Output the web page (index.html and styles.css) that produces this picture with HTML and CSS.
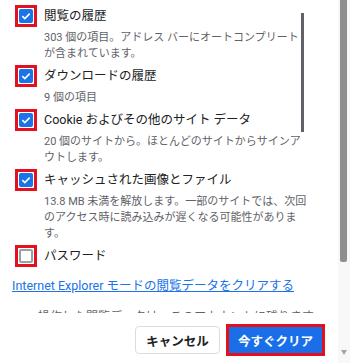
FILE: index.html
```html
<!DOCTYPE html>
<html lang="ja">
<head>
<meta charset="utf-8">
<link rel="stylesheet" href="styles.css">
</head>
<body>
<div class="page">
  <div class="dialog">
    <div class="scroll">
      <div class="thumb-inner"></div>
      <div class="item">
        <span class="mark"><span class="cb checked"><svg viewBox="0 0 14 14"><path d="M3.3 7.2 L5.8 9.6 L10.7 4.6" fill="none" stroke="#fff" stroke-width="1.6"/></svg></span></span>
        <span class="label">閲覧の履歴</span>
        <span class="desc">303 個の項目。アドレス バーにオートコンプリート<br>が含まれています。</span>
      </div>
      <div class="item">
        <span class="mark"><span class="cb checked"><svg viewBox="0 0 14 14"><path d="M3.3 7.2 L5.8 9.6 L10.7 4.6" fill="none" stroke="#fff" stroke-width="1.6"/></svg></span></span>
        <span class="label">ダウンロードの履歴</span>
        <span class="desc">9 個の項目</span>
      </div>
      <div class="item">
        <span class="mark"><span class="cb checked"><svg viewBox="0 0 14 14"><path d="M3.3 7.2 L5.8 9.6 L10.7 4.6" fill="none" stroke="#fff" stroke-width="1.6"/></svg></span></span>
        <span class="label">Cookie およびその他のサイト データ</span>
        <span class="desc">20 個のサイトから。ほとんどのサイトからサインア<br>ウトします。</span>
      </div>
      <div class="item">
        <span class="mark"><span class="cb checked"><svg viewBox="0 0 14 14"><path d="M3.3 7.2 L5.8 9.6 L10.7 4.6" fill="none" stroke="#fff" stroke-width="1.6"/></svg></span></span>
        <span class="label">キャッシュされた画像とファイル</span>
        <span class="desc">13.8 MB 未満を解放します。一部のサイトでは、次回<br>のアクセス時に読み込みが遅くなる可能性がありま<br>す。</span>
      </div>
      <div class="item">
        <span class="mark"><span class="cb"></span></span>
        <span class="label">パスワード</span>
      </div>
      <a class="link" href="#">Internet Explorer モードの閲覧データをクリアする</a>
      <p class="hidden-line">操作した閲覧データは、このアカウントに残ります。</p>
    </div>
    <div class="footer">
      <button class="btn cancel">キャンセル</button>
      <span class="hl"><button class="btn primary">今すぐクリア</button></span>
    </div>
  </div>
  <div class="sbar">
    <div class="sthumb"></div>
    <div class="sarrow"></div>
  </div>
</div>
</body>
</html>
```
FILE: styles.css
```css
html, body {
  margin: 0;
  padding: 0;
  background: #fff;
}
body {
  font-family: Roboto, "Noto Sans CJK JP", sans-serif;
  color: #202124;
  width: 350px;
  height: 363px;
  overflow: hidden;
}
.page {
  display: flex;
  width: 350px;
  height: 363px;
}
.dialog {
  width: 338px;
  display: flex;
  flex-direction: column;
}
.scroll {
  position: relative;
  height: 313px;
  overflow: hidden;
  padding: 5px 0 0 15px;
  box-sizing: border-box;
}
.thumb-inner {
  position: absolute;
  left: 301px;
  top: 13px;
  width: 3px;
  height: 119px;
  background: #5f6368;
}
.item {
  display: grid;
  grid-template-columns: 22px 1fr;
  column-gap: 7px;
  margin-bottom: 3px;
  width: 290px;
}
.mark {
  width: 22px;
  height: 22px;
  box-sizing: border-box;
  border: 3px solid #e3101d;
  display: flex;
  align-items: center;
  justify-content: center;
}
.cb {
  width: 14px;
  height: 14px;
  box-sizing: border-box;
  border-radius: 2px;
  border: 2px solid #9aa0a6;
  display: block;
}
.cb.checked {
  border: none;
  background: #1a73e8;
}
.cb svg {
  display: block;
  width: 14px;
  height: 14px;
}
.label {
  font-size: 12.5px;
  line-height: 22px;
  color: #202124;
}
.desc {
  grid-column: 2;
  padding-top: 3px;
  font-size: 11px;
  line-height: 16px;
  color: #5f6368;
  white-space: nowrap;
}
.link {
  display: block;
  margin: 9px 0 0 -3px;
  font-size: 12.5px;
  line-height: 20px;
  color: #1a73e8;
  text-decoration: underline;
}
.hidden-line {
  margin: 12px 0 0 23px;
  font-size: 12px;
  line-height: 18px;
  color: #5f6368;
  white-space: nowrap;
}
.footer {
  display: flex;
  justify-content: flex-end;
  align-items: center;
  gap: 6px;
  padding: 11px 13px 0 0;
}
.btn {
  font-family: Roboto, "Noto Sans CJK JP", sans-serif;
  font-size: 12.5px;
  font-weight: 700;
  border-radius: 4px;
  cursor: pointer;
}
.cancel {
  width: 85px;
  height: 28px;
  background: #fff;
  border: 1px solid #dadce0;
  color: #202124;
}
.hl {
  display: block;
  border: 3px solid #e3101d;
}
.primary {
  display: block;
  width: 93px;
  height: 26px;
  border: none;
  border-radius: 0;
  background: #1a6fe8;
  color: #fff;
}
.sbar {
  width: 12px;
  background: #f8f8f8;
  display: flex;
  flex-direction: column;
  align-items: center;
  justify-content: space-between;
  padding-bottom: 8px;
  box-sizing: border-box;
}
.sthumb {
  width: 7px;
  height: 262px;
  background: #8f8f8f;
  border-radius: 0 0 2px 2px;
  margin-left: -2px;
}
.sarrow {
  width: 0;
  height: 0;
  border-left: 3.5px solid transparent;
  border-right: 3.5px solid transparent;
  border-top: 5px solid #a3a3a3;
}
```
